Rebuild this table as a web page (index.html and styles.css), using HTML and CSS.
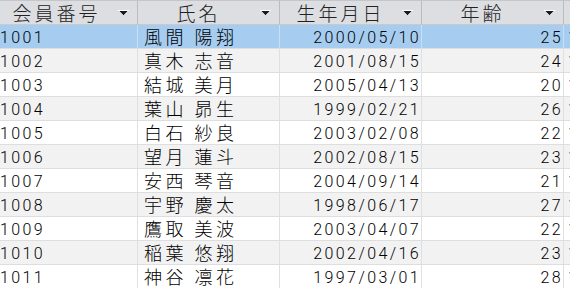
FILE: index.html
```html
<!DOCTYPE html>
<html lang="ja">
<head>
<meta charset="utf-8">
<title>会員</title>
<link rel="stylesheet" href="styles.css">
</head>
<body>
<div class="sheet">
<table class="grid">
  <thead>
    <tr>
      <th class="c1"><div class="hd"><span class="ht">会員番号</span><svg class="dd" width="11" height="6" viewBox="0 0 11 6"><rect x="0" y="0" width="11" height="1" fill="#fff"/><path d="M1 1 H10 L5.5 5.5 Z" fill="#1a1a1a"/><path d="M1 1 L5.5 5.5 L10 1" fill="none" stroke="#fff" stroke-width="0.6"/></svg></div></th>
      <th class="c2"><div class="hd"><span class="ht">氏名</span><svg class="dd" width="11" height="6" viewBox="0 0 11 6"><rect x="0" y="0" width="11" height="1" fill="#fff"/><path d="M1 1 H10 L5.5 5.5 Z" fill="#1a1a1a"/><path d="M1 1 L5.5 5.5 L10 1" fill="none" stroke="#fff" stroke-width="0.6"/></svg></div></th>
      <th class="c3"><div class="hd"><span class="ht">生年月日</span><svg class="dd" width="11" height="6" viewBox="0 0 11 6"><rect x="0" y="0" width="11" height="1" fill="#fff"/><path d="M1 1 H10 L5.5 5.5 Z" fill="#1a1a1a"/><path d="M1 1 L5.5 5.5 L10 1" fill="none" stroke="#fff" stroke-width="0.6"/></svg></div></th>
      <th class="c4"><div class="hd"><span class="ht">年齢</span><svg class="dd" width="11" height="6" viewBox="0 0 11 6"><rect x="0" y="0" width="11" height="1" fill="#fff"/><path d="M1 1 H10 L5.5 5.5 Z" fill="#1a1a1a"/><path d="M1 1 L5.5 5.5 L10 1" fill="none" stroke="#fff" stroke-width="0.6"/></svg></div></th>
      <th class="c5"></th>
    </tr>
  </thead>
  <tbody>
    <tr class="sel"><td class="num">1001</td><td class="name">風間 陽翔</td><td class="num r">2000/05/10</td><td class="num r">25</td><td class="num">1</td></tr>
    <tr class="alt"><td class="num">1002</td><td class="name">真木 志音</td><td class="num r">2001/08/15</td><td class="num r">24</td><td class="num">1</td></tr>
    <tr><td class="num">1003</td><td class="name">結城 美月</td><td class="num r">2005/04/13</td><td class="num r">20</td><td class="num">1</td></tr>
    <tr class="alt"><td class="num">1004</td><td class="name">葉山 昴生</td><td class="num r">1999/02/21</td><td class="num r">26</td><td class="num">1</td></tr>
    <tr><td class="num">1005</td><td class="name">白石 紗良</td><td class="num r">2003/02/08</td><td class="num r">22</td><td class="num">1</td></tr>
    <tr class="alt"><td class="num">1006</td><td class="name">望月 蓮斗</td><td class="num r">2002/08/15</td><td class="num r">23</td><td class="num">1</td></tr>
    <tr><td class="num">1007</td><td class="name">安西 琴音</td><td class="num r">2004/09/14</td><td class="num r">21</td><td class="num">1</td></tr>
    <tr class="alt"><td class="num">1008</td><td class="name">宇野 慶太</td><td class="num r">1998/06/17</td><td class="num r">27</td><td class="num">1</td></tr>
    <tr><td class="num">1009</td><td class="name">鷹取 美波</td><td class="num r">2003/04/07</td><td class="num r">22</td><td class="num">1</td></tr>
    <tr class="alt"><td class="num">1010</td><td class="name">稲葉 悠翔</td><td class="num r">2002/04/16</td><td class="num r">23</td><td class="num">1</td></tr>
    <tr><td class="num">1011</td><td class="name">神谷 凛花</td><td class="num r">1997/03/01</td><td class="num r">28</td><td class="num">1</td></tr>
  </tbody>
</table>
</div>
</body>
</html>
```
FILE: styles.css
```css
html, body {
  margin: 0;
  padding: 0;
  background: #ffffff;
  overflow: hidden;
}
.sheet {
  width: 570px;
  height: 288px;
  overflow: hidden;
}
.grid {
  margin-left: -4px;
  border-collapse: separate;
  border-spacing: 0;
  table-layout: fixed;
  width: 720px;
}
.grid th, .grid td {
  box-sizing: border-box;
  padding: 0;
  white-space: nowrap;
  overflow: hidden;
}
.c1, .c2, .c3, .c4 { width: 142px; }
.c5 { width: 152px; }
.grid th {
  height: 25px;
  background: #dcdee2;
  border-top: 1px solid #c4c6ca;
  border-bottom: 1px solid #c8cacd;
  border-right: 1px solid #b8bbc0;
  font-family: "Noto Sans CJK JP", sans-serif;
  font-weight: 300;
  font-size: 19px;
  color: #222;
  vertical-align: middle;
}
.hd {
  display: flex;
  align-items: center;
  height: 23px;
}
.ht {
  flex: 1;
  text-align: center;
  letter-spacing: 3px;
  padding-left: 3px;
  line-height: 23px;
  padding-right: 4px;
}
.dd {
  display: block;
  margin-right: 8px;
  margin-top: 1px;
}
.grid td {
  height: 24px;
  border-bottom: 1px solid #dedede;
  border-right: 1px solid #e0e0e0;
  color: #000;
  vertical-align: top;
}
.grid tr.alt td { background: #f2f2f2; }
.grid tr.sel td { background: #a6cdf0; border-right-color: #c9dff3; }
.num {
  font-family: Roboto, "Liberation Sans", sans-serif;
  font-weight: 300;
  font-size: 16px;
  letter-spacing: 2.4px;
  line-height: 21px;
  padding: 2px 0 0 4px !important;
}
.num.r {
  text-align: right;
  padding: 2px 0 0 0 !important;
}
.name {
  font-family: "Noto Sans CJK JP", sans-serif;
  font-weight: 300;
  font-size: 18px;
  letter-spacing: 3.5px;
  line-height: 23px;
  padding-left: 6px !important;
}
```
